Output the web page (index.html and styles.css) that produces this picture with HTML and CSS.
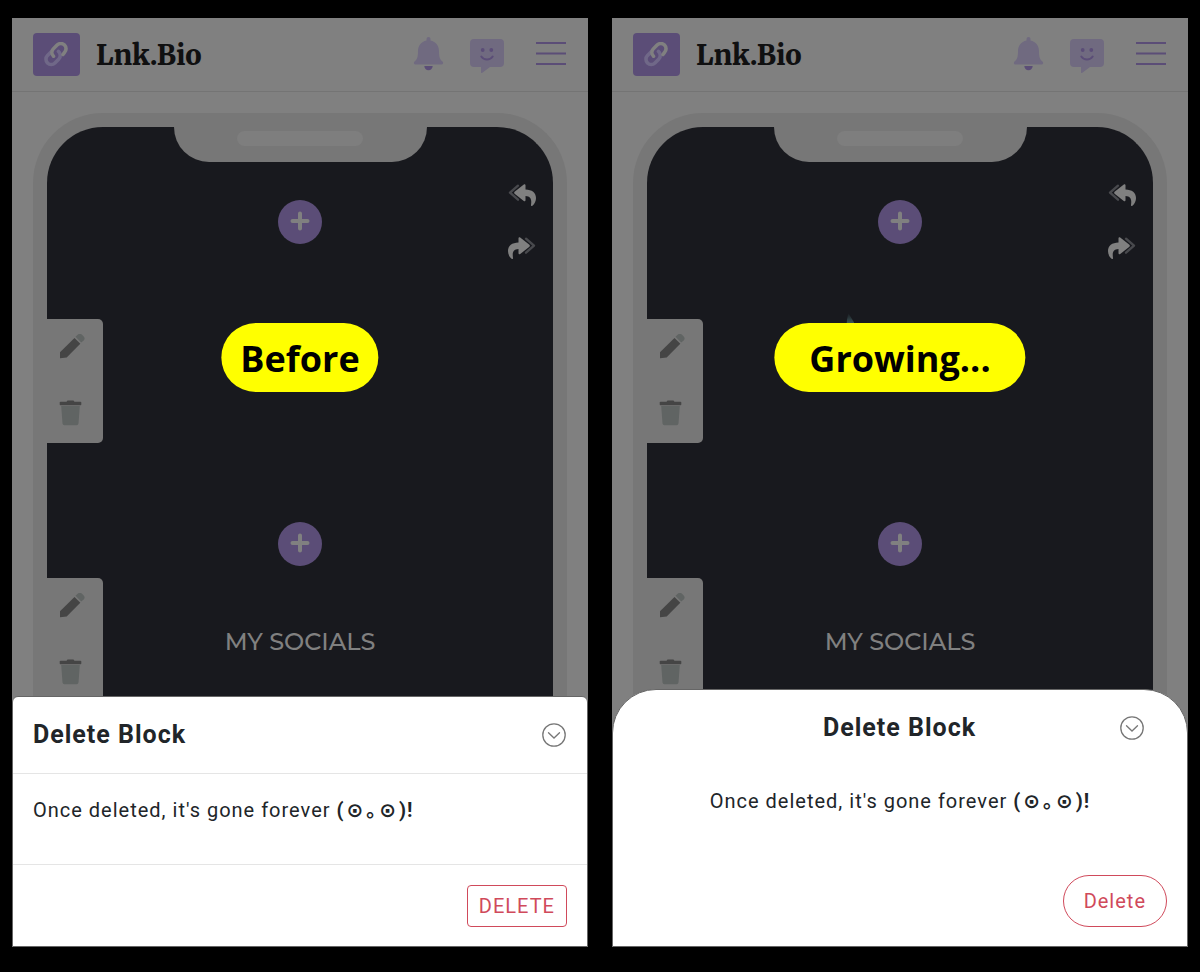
FILE: index.html
```html
<!DOCTYPE html>
<html lang="en">
<head>
    <meta charset="UTF-8">
    <meta name="viewport" content="width=device-width, initial-scale=1.0">
    <title>Lnk.Bio - Delete Block</title>
    <link rel="stylesheet" href="styles.css">
</head>
<body>
    <!-- Shared icons -->
    <svg class="sprite" aria-hidden="true">
        <symbol id="link" viewBox="0 0 26 26">
            <g fill="none" stroke-width="3.600" stroke-linecap="round">
                <path class="soft" d="M7.500 9.500L3.500 13.500a5.200 5.200 0 0 0 7.400 7.400l4-4a5.200 5.200 0 0 0-.5-7.500"/>
                <path class="strong" d="M9.500 14.200a5.200 5.200 0 0 1-.4-7.100l4-4a5.200 5.200 0 0 1 7.400 7.400l-1.500 2"/>
            </g>
        </symbol>
        <symbol id="bell" viewBox="0 0 34 36">
            <path class="soft" d="M20.500 0a2 2 0 0 1 2 2v1.400c5.500 1.200 8.500 5.400 8.500 10.600 0 6.500 1 8.500 3.500 10.500 1.300 1.300.5 3-1 3H7.500c-1.500 0-2.300-1.700-1-3C9 22.500 10 20.500 10 14 10 8.800 13 4.600 18.500 3.400V2a2 2 0 0 1 2-2z"/>
            <path class="strong" d="M16.300 29h8.400a4.200 4.200 0 0 1-8.400 0z"/>
        </symbol>
        <symbol id="chat" viewBox="0 0 34 36">
            <path class="soft" d="M4 2h26a4 4 0 0 1 4 4v20a4 4 0 0 1-4 4H20l-7.600 5.800c-.8.500-1.400.2-1.400-.6V30H4a4 4 0 0 1-4-4V6a4 4 0 0 1 4-4z"/>
            <circle class="strong" cx="12.700" cy="13" r="1.900"/>
            <circle class="strong" cx="21.300" cy="13" r="1.900"/>
            <path class="line" d="M11.300 19.500c2.700 4 8.700 4 11.400 0" stroke-width="2" stroke-linecap="round" fill="none"/>
        </symbol>
        <symbol id="menu" viewBox="0 0 34 36">
            <path class="line" d="M4 6h30M4 16.500h30M4 27h30" stroke-width="2"/>
        </symbol>
        <symbol id="plus" viewBox="0 0 20 20">
            <path d="M10 2.500v15M2.500 10h15" stroke="#808080" stroke-width="4" stroke-linecap="round"/>
        </symbol>
        <symbol id="undo" viewBox="0 0 28 22">
            <path d="M10 1.700L2 8.700l8 7" fill="none" stroke="#48494d" stroke-width="2.400" stroke-linecap="round" stroke-linejoin="round"/>
            <path d="M6.600 7.700L15.800.5c.8-.6 1.700-.3 1.700.7v4.200c6.500.2 10.500 3 10.500 8.600 0 3-1.300 6-3.600 7.800-.8.500-1.600.1-1.400-.8.800-5.500 0-8.700-5.500-9v4.200c0 1-.9 1.300-1.700.7L6.600 9.700c-.6-.5-.6-1.400 0-2z" fill="#808080"/>
        </symbol>
        <symbol id="pencil" viewBox="0 0 26 26">
            <path class="solid" d="M1 18.300L15.500 4l5.800 5.800L7.700 23.500 1 24.300z"/>
            <path class="pale" d="M16.500 2.800l2.400-2.200a2.800 2.800 0 0 1 3.800 0l2 2a2.800 2.800 0 0 1 0 3.800l-2.500 2.200z"/>
        </symbol>
        <symbol id="trash" viewBox="0 0 26 26">
            <path class="pale" d="M2.200 6h18.600l-1.300 17.400a2 2 0 0 1-2 1.800H5.500a2 2 0 0 1-2-1.800z"/>
            <path class="solid" d="M1.500 1.800h6L8.500.4h6l1 1.400h6a.8.800 0 0 1 .8.800v1.800a.8.800 0 0 1-.8.800h-20a.8.800 0 0 1-.8-.8V2.600a.8.800 0 0 1 .8-.8z"/>
        </symbol>
        <symbol id="collapse" viewBox="0 0 24 24">
            <g fill="none" stroke="#777" stroke-width="1.300">
                <circle cx="12" cy="12" r="11.200"/>
                <path d="M6.500 9.700l5.500 5.300 5.500-5.300" stroke-linecap="round"/>
            </g>
        </symbol>
    </svg>

    <main class="comparison">
        <section class="panel">
            <header class="topbar">
                <a class="brand" href="#">
                    <span class="logo"><svg><use href="#link"/></svg></span>
                    Lnk.Bio
                </a>
                <nav class="actions">
                    <button aria-label="Notifications"><svg><use href="#bell"/></svg></button>
                    <button aria-label="Chat"><svg><use href="#chat"/></svg></button>
                    <button aria-label="Menu"><svg><use href="#menu"/></svg></button>
                </nav>
            </header>
            <div class="phone">
                <div class="notch"><span class="speaker"></span></div>
                <div class="history">
                    <button aria-label="Undo"><svg><use href="#undo"/></svg></button>
                    <button class="redo" aria-label="Redo"><svg><use href="#undo"/></svg></button>
                </div>
                <button class="add" aria-label="Add block"><svg><use href="#plus"/></svg></button>
                <div class="block">
                    <div class="tools">
                        <button aria-label="Edit"><svg><use href="#pencil"/></svg></button>
                        <button aria-label="Delete"><svg><use href="#trash"/></svg></button>
                    </div>
                </div>
                <button class="add" aria-label="Add block"><svg><use href="#plus"/></svg></button>
                <div class="block socials">
                    <div class="tools">
                        <button aria-label="Edit"><svg><use href="#pencil"/></svg></button>
                        <button aria-label="Delete"><svg><use href="#trash"/></svg></button>
                    </div>
                    <h2>MY SOCIALS</h2>
                </div>
            </div>
            <strong class="label">Before</strong>
            <div class="sheet" role="dialog" aria-labelledby="title-before">
                <div class="sheet-header">
                    <h1 id="title-before">Delete Block</h1>
                    <button class="close" aria-label="Close"><svg><use href="#collapse"/></svg></button>
                </div>
                <p class="sheet-body">Once deleted, it's gone forever <b>(<span class="eye">⊙</span>｡<span class="eye">⊙</span>)!</b></p>
                <div class="sheet-footer">
                    <button class="delete">DELETE</button>
                </div>
            </div>
        </section>

        <section class="panel">
            <header class="topbar">
                <a class="brand" href="#">
                    <span class="logo"><svg><use href="#link"/></svg></span>
                    Lnk.Bio
                </a>
                <nav class="actions">
                    <button aria-label="Notifications"><svg><use href="#bell"/></svg></button>
                    <button aria-label="Chat"><svg><use href="#chat"/></svg></button>
                    <button aria-label="Menu"><svg><use href="#menu"/></svg></button>
                </nav>
            </header>
            <div class="phone">
                <div class="notch"><span class="speaker"></span></div>
                <div class="history">
                    <button aria-label="Undo"><svg><use href="#undo"/></svg></button>
                    <button class="redo" aria-label="Redo"><svg><use href="#undo"/></svg></button>
                </div>
                <button class="add" aria-label="Add block"><svg><use href="#plus"/></svg></button>
                <div class="block">
                    <div class="tools">
                        <button aria-label="Edit"><svg><use href="#pencil"/></svg></button>
                        <button aria-label="Delete"><svg><use href="#trash"/></svg></button>
                    </div>
                </div>
                <button class="add" aria-label="Add block"><svg><use href="#plus"/></svg></button>
                <div class="block socials">
                    <div class="tools">
                        <button aria-label="Edit"><svg><use href="#pencil"/></svg></button>
                        <button aria-label="Delete"><svg><use href="#trash"/></svg></button>
                    </div>
                    <h2>MY SOCIALS</h2>
                </div>
            </div>
            <strong class="label wide">Growing...</strong>
            <div class="sheet rounded" role="dialog" aria-labelledby="title-growing">
                <div class="sheet-header">
                    <h1 id="title-growing">Delete Block</h1>
                    <button class="close" aria-label="Close"><svg><use href="#collapse"/></svg></button>
                </div>
                <p class="sheet-body">Once deleted, it's gone forever <b>(<span class="eye">⊙</span>｡<span class="eye">⊙</span>)!</b></p>
                <div class="sheet-footer">
                    <button class="delete">Delete</button>
                </div>
            </div>
        </section>
    </main>
</body>
</html>
```
FILE: styles.css
```css
:root {
    --page: #808080;
    --frame: #777777;
    --screen: #18191e;
    --purple: #5b4d77;
    --purple-soft: #706a80;
    --text: #212529;
    --danger: #d04a5b;
}

* {
    box-sizing: border-box;
}

body {
    margin: 0;
    background: #000;
    color: var(--text);
    font-family: Roboto, "Noto Sans CJK JP", sans-serif;
}

h1, h2, p {
    margin: 0;
}

button {
    padding: 0;
    border: none;
    background: none;
    font-family: inherit;
    cursor: pointer;
}

svg {
    display: block;
}

.sprite {
    position: absolute;
    width: 0;
    height: 0;
}

.comparison {
    display: grid;
    grid-template-columns: 1fr 1fr;
    gap: 24px;
    min-height: 100vh;
    padding: 18px 12px 25px;
}

.panel {
    position: relative;
    display: flex;
    flex-direction: column;
    overflow: hidden;
    background: var(--page);
}

/* Top bar */
.topbar {
    display: flex;
    align-items: center;
    justify-content: space-between;
    padding: 15px 22px 15px 21px;
    border-bottom: 1px solid #747474;
}

.brand {
    display: flex;
    align-items: center;
    gap: 16px;
    color: #101011;
    font-family: Merriweather, "DejaVu Serif Condensed", "DejaVu Serif", serif;
    font-size: 27px;
    font-weight: 900;
    line-height: 40px;
    text-decoration: none;
}

.logo {
    display: grid;
    place-items: center;
    width: 47px;
    height: 43px;
    border-radius: 4px;
    background: var(--purple);
}

.logo svg {
    width: 26px;
    height: 26px;
}

#link .soft {
    stroke: #706888;
}

#link .strong {
    stroke: #808080;
}

.actions {
    display: flex;
    gap: 28px;
}

.actions svg {
    width: 34px;
    height: 36px;
    overflow: visible;
}

#bell {
    overflow: visible;
}

#bell .soft, #chat .soft {
    fill: var(--purple-soft);
}

#bell .strong, #chat .strong {
    fill: var(--purple);
}

.line {
    stroke: var(--purple);
}

/* Phone preview */
.phone {
    position: relative;
    flex: 1;
    display: flex;
    flex-direction: column;
    align-items: center;
    margin: 21px 21px 0;
    border: 14px solid var(--frame);
    border-bottom: none;
    border-radius: 70px 70px 0 0;
    background: var(--screen);
}

.notch {
    width: 50%;
    height: 35px;
    margin-bottom: 38px;
    padding-top: 4px;
    border-radius: 0 0 35px 35px;
    background: var(--frame);
}

.speaker {
    display: block;
    width: 50%;
    height: 15px;
    margin: 0 auto;
    border-radius: 8px;
    background: #7e7e7e;
}

.history {
    position: absolute;
    top: 57px;
    right: 17px;
    display: flex;
    flex-direction: column;
    gap: 31px;
}

.history svg {
    width: 28px;
    height: 22px;
}

.redo {
    transform: scaleX(-1);
}

.add {
    display: grid;
    place-items: center;
    width: 44px;
    height: 44px;
    padding-bottom: 2px;
    border-radius: 50%;
    background: var(--purple);
}

.add svg {
    width: 20px;
    height: 20px;
}

.block {
    display: grid;
    grid-template-columns: 56px 1fr 56px;
    align-items: center;
    width: 100%;
    margin: 75px 0 79px;
}

.block.socials {
    margin: 12px 0;
}

.tools {
    display: flex;
    flex-direction: column;
    align-items: flex-start;
    gap: 40px;
    padding: 15px 12px 17px;
    border-radius: 0 5px 5px 0;
    background: var(--frame);
}

.tools svg {
    width: 26px;
    height: 26px;
}

.solid {
    fill: #454545;
}

.pale {
    fill: #606463;
}

.socials h2 {
    padding-top: 2px;
    color: #808080;
    font-family: Montserrat, Lato, sans-serif;
    font-size: 24px;
    font-weight: 500;
    text-align: center;
}

.label {
    position: absolute;
    top: 305px;
    left: 50%;
    padding: 13px 19px 10px;
    border-radius: 35px;
    background: #ff0;
    color: #000;
    font: bold 36px/46px "Open Sans", sans-serif;
    transform: translateX(-50%);
}

.label.wide {
    padding: 13px 35px 10px;
}

/* Glint of the preview's picture behind the label */
.label.wide::before {
    content: "";
    position: absolute;
    top: -10px;
    left: 72px;
    width: 8px;
    height: 10px;
    background: linear-gradient(to bottom, #18191e, #3a5355);
    clip-path: polygon(25% 0, 100% 100%, 0 100%);
}

/* Bottom sheet */
.sheet {
    position: absolute;
    right: 0;
    bottom: 0;
    left: 0;
    border: 1px solid #666;
    border-radius: 6px 6px 0 0;
    background: #fff;
    letter-spacing: 1px;
}

.sheet-header {
    display: flex;
    align-items: center;
    justify-content: space-between;
    padding: 22px 21px 22px 20px;
    border-bottom: 1px solid #e5e5e5;
}

.sheet-header h1 {
    font-size: 25px;
    line-height: 32px;
    font-weight: bold;
}

.close svg {
    width: 24px;
    height: 24px;
}

.sheet-body {
    padding: 20px 20px 38px;
    font-size: 20px;
    line-height: 32px;
}

.eye {
    margin: 0 2px;
    font-family: "DejaVu Sans", sans-serif;
    font-weight: bold;
}

.sheet-footer {
    display: flex;
    justify-content: flex-end;
    padding: 20px 20px 19px;
    border-top: 1px solid #e5e5e5;
}

.delete {
    padding: 4px 11px;
    border: 1px solid var(--danger);
    border-radius: 4px;
    color: var(--danger);
    font-size: 20px;
    line-height: 32px;
    letter-spacing: 1px;
}

.rounded {
    border-radius: 44px 44px 0 0;
}

.rounded .sheet-header {
    position: relative;
    justify-content: center;
    border-bottom: none;
}

.rounded .close {
    position: absolute;
    right: 43px;
}

.rounded .sheet-body {
    padding-top: 19px;
    text-align: center;
}

.rounded .sheet-footer {
    border-top: none;
}

.rounded .delete {
    padding: 9px 20px;
    border-radius: 26px;
}
```
